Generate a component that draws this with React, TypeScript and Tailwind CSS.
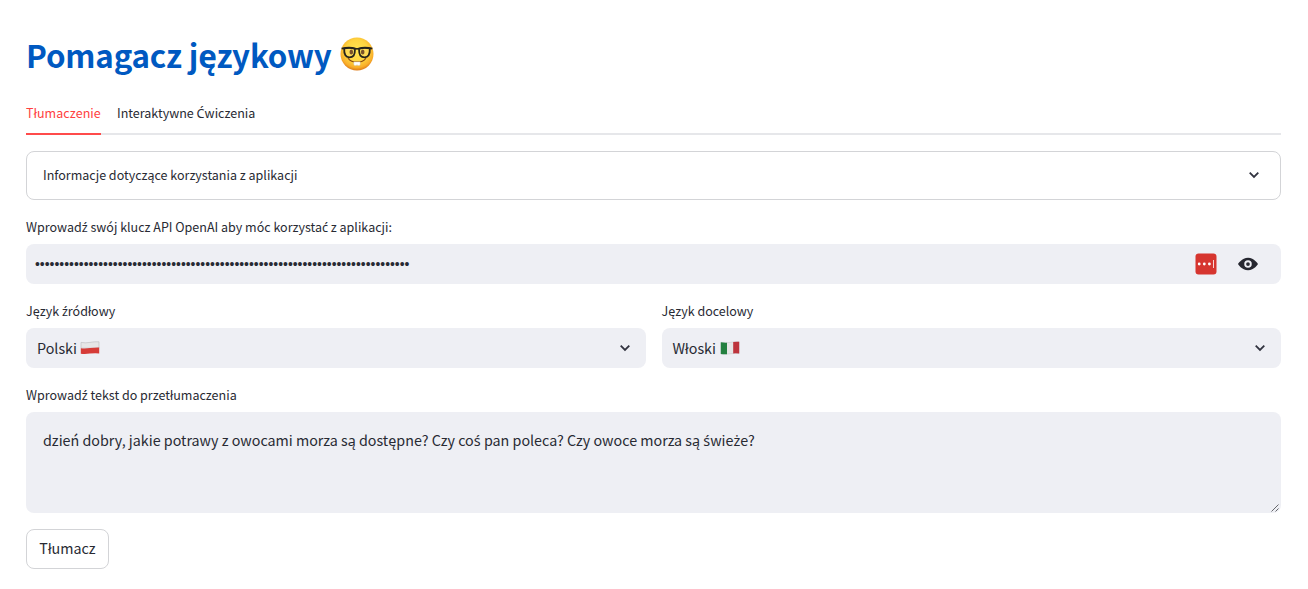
import React from "react";

type IconProps = { className?: string };

const ACCENTED = /([źśćżĆ])/;

function Text({ children }: { children: string }) {
  return (
    <span className="whitespace-nowrap">
      {children.split(ACCENTED).map((part, i) =>
        i % 2 === 1 ? (
          <span key={i} className="font-['Noto_Sans',sans-serif] text-[1.01em] leading-none">{part}</span>
        ) : (
          part
        ),
      )}
    </span>
  );
}

function NerdFace() {
  return (
    <svg width="36" height="36" viewBox="0 0 36 36" aria-hidden="true">
      <defs>
        <radialGradient id="face" cx="50%" cy="40%" r="60%">
          <stop offset="0" stopColor="#ffe552" />
          <stop offset="0.55" stopColor="#fed541" />
          <stop offset="0.85" stopColor="#f9ae2a" />
          <stop offset="1" stopColor="#dd7a18" />
        </radialGradient>
      </defs>
      <circle cx="18" cy="18" r="16.5" fill="url(#face)" />
      <ellipse cx="12.3" cy="16" rx="1.8" ry="2.6" fill="#6b3f12" />
      <ellipse cx="23.700" cy="16" rx="1.8" ry="2.6" fill="#6b3f12" />
      <path d="M9.300 22.500c3.400 5 14 5 17.400 0" fill="none" stroke="#8a4a12" strokeWidth="1.3" strokeLinecap="round" />
      <path d="M14.800 25.900h6.400v2.400q0 1.200-1.200 1.200h-1q-.9 0-1-.8-.1.800-1 .8h-1q-1.200 0-1.200-1.200z" fill="#fff" stroke="#c9c2b8" strokeWidth=".4" />
      <path d="M5.200 12.500q5.400-1.400 10.800.3 0 4.900-1.400 6.900-1.400 1.600-4.200 1.600t-4-2q-1.400-2.100-1.200-6.800zM30.800 12.500q-5.400-1.400-10.800.3 0 4.900 1.400 6.900 1.400 1.600 4.200 1.600t4-2q1.400-2.100 1.200-6.800z" fill="#fff" fillOpacity=".1" stroke="#25231c" strokeWidth="1.8" />
      <path d="M2.600 12.600q7.600-2 13.600-.1 1.800.6 3.600 0 6-1.900 13.600.1" fill="none" stroke="#25231c" strokeWidth="1.8" />
    </svg>
  );
}

function Chevron({ className }: IconProps) {
  return (
    <svg className={className} width="20" height="20" viewBox="0 0 20 20" aria-hidden="true">
      <path d="M5.700 7.700l4.300 4.200 4.300-4.200" fill="none" stroke="#31333f" strokeWidth="1.8" />
    </svg>
  );
}

function Eye() {
  return (
    <svg width="20" height="20" viewBox="0 0 8 8" fill="#262730" aria-hidden="true">
      <path d="M4.030 1.500C1.500 1.500 0 4 0 4s1.500 2.500 4.030 2.500C6.500 6.500 8 4 8 4S6.500 1.500 4.030 1.500zM4 2.500A1.500 1.500 0 0 1 4 5.500a1.500 1.500 0 0 1 0-3zm0 .750a.75.75 0 1 0 0 1.500.75.75 0 0 0 0-1.500z" />
    </svg>
  );
}

function PasswordBadge() {
  return (
    <svg width="22" height="22" viewBox="0 0 22 22" aria-hidden="true">
      <rect x=".5" y=".5" width="21" height="21" rx="3" fill="#d6352f" />
      <circle cx="4.200" cy="11" r="1.400" fill="#fff" />
      <circle cx="9.300" cy="11" r="1.400" fill="#fff" />
      <circle cx="14.400" cy="11" r="1.400" fill="#fff" />
      <path d="M18.500 7v8" stroke="#fff" strokeWidth=".8" />
    </svg>
  );
}

function PolishFlag() {
  return (
    <svg width="20" height="16" viewBox="0 0 20 16" aria-hidden="true">
      <path d="M1 2.400q4.500.9 9 0t9-.6V8.200H1z" fill="#e6e6e7" stroke="#b8b8bc" strokeWidth=".6" />
      <path d="M.8 8.200q4.600.5 9.200-.2t9.200-.6v6q-4.600-.5-9.200.2t-9.200.2z" fill="#d63c38" />
    </svg>
  );
}

function ItalianFlag() {
  return (
    <svg width="20" height="16" viewBox="0 0 20 16" aria-hidden="true">
      <path d="M1 2.400q4.500.9 9 0t9-.6v11.800q-4.500-.5-9 .2t-9 .1z" fill="#e6e6e6" stroke="#b8b8bc" strokeWidth=".4" />
      <path d="M.8 2.300q3.200.6 6.200.4v11.500q-3 .2-6.200-.2z" fill="#23803f" />
      <path d="M13.200 1.900q3-.4 6-.2v11.800q-3-.3-6-.1z" fill="#bd343c" />
    </svg>
  );
}

const KEY_LENGTH = 77;

export default function App() {
  return (
    <main className="h-[589px] w-full overflow-hidden bg-white pr-[27px] pl-[26px] font-['Noto_Sans_CJK_SC','Noto_Sans',sans-serif] text-[12.52px] text-[#282a33]">
      <h1 className="flex h-[91px] items-center pt-[17px] text-[31.3px] leading-[43px] font-bold tracking-[-0.18px] text-[#0059c1]">
        <Text>Pomagacz językowy</Text>
        <span className="ml-[7px]"><NerdFace /></span>
      </h1>

      <nav className="mt-px flex h-[43px] gap-4 border-b-2 border-[#e6e7ea]">
        <button className="h-[43px] w-[75px] border-b-2 border-[#ff4b4b] pt-0.5 tracking-[0.06px] text-[#ff4040]"><Text>Tłumaczenie</Text></button>
        <button className="h-[43px] border-b-2 border-transparent pt-0.5"><Text>Interaktywne Ćwiczenia</Text></button>
      </nav>

      <section className="mt-4 flex h-[49px] items-center justify-between rounded-lg border border-[#d3d4d7] pr-4 pl-4">
        <Text>Informacje dotyczące korzystania z aplikacji</Text>
        <Chevron className="mb-0.5" />
      </section>

      <div className="mt-4 h-7 leading-[21px]"><Text>Wprowadź swój klucz API OpenAI aby móc korzystać z aplikacji:</Text></div>
      <div className="flex h-10 items-center rounded-lg bg-[#eeeff4] pr-[23px] pl-[9px]">
        <span className="flex-1 pt-px font-['Liberation_Sans',sans-serif] text-[13.9px]">{"•".repeat(KEY_LENGTH)}</span>
        <PasswordBadge />
        <span className="ml-[21px]"><Eye /></span>
      </div>

      <div className="mt-4 grid grid-cols-2 gap-4">
        <div>
          <div className="h-7 leading-[21px]"><Text>Język źródłowy</Text></div>
          <div className="flex h-10 items-center rounded-lg bg-[#eeeff4] pr-[11px] pl-[11px] text-[14.31px]">
            <Text>Polski</Text>
            <span className="ml-[3px]"><PolishFlag /></span>
            <Chevron className="ml-auto" />
          </div>
        </div>
        <div>
          <div className="h-7 leading-[21px]"><Text>Język docelowy</Text></div>
          <div className="flex h-10 items-center rounded-lg bg-[#eeeff4] pr-[11px] pl-[11px] text-[14.31px]">
            <Text>Włoski</Text>
            <span className="ml-1"><ItalianFlag /></span>
            <Chevron className="ml-auto" />
          </div>
        </div>
      </div>

      <div className="mt-4 h-7 leading-[21px]"><Text>Wprowadź tekst do przetłumaczenia</Text></div>
      <div className="flex h-[101px] flex-col justify-between rounded-lg bg-[#eeeff4] pt-4 pl-[17px] text-[14.31px] leading-6">
        <p><Text>dzień dobry, jakie potrawy z owocami morza są dostępne? Czy coś pan poleca? Czy owoce morza są świeże?</Text></p>
        <svg className="self-end" width="10" height="10" viewBox="0 0 10 10" aria-hidden="true">
          <path d="M.5 8.500l7-7M4.500 8.500l3-3" stroke="#66676c" fill="none" />
        </svg>
      </div>
      <button className="mt-4 flex h-10 w-[83px] items-center justify-center rounded-lg border border-[#d3d4d7] pb-0.5 text-[14.31px]"><Text>Tłumacz</Text></button>
    </main>
  );
}
